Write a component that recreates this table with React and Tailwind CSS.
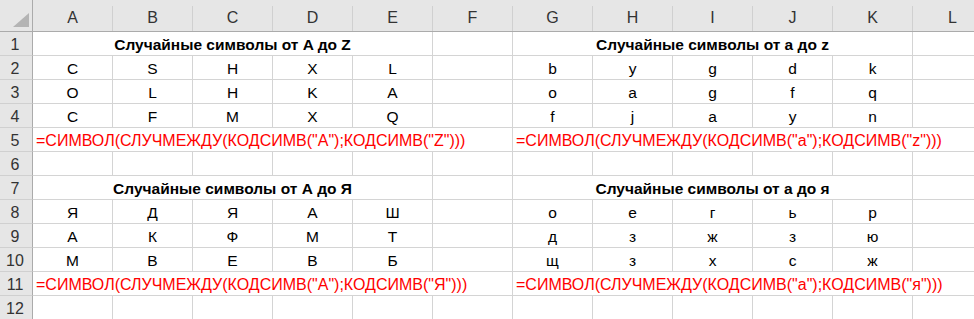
const cols = ['A', 'B', 'C', 'D', 'E', 'F', 'G', 'H', 'I', 'J', 'K', 'L']

const leftData = {
  2: ['C', 'S', 'H', 'X', 'L'],
  3: ['O', 'L', 'H', 'K', 'A'],
  4: ['C', 'F', 'M', 'X', 'Q'],
  8: ['Я', 'Д', 'Я', 'А', 'Ш'],
  9: ['А', 'К', 'Ф', 'М', 'Т'],
  10: ['М', 'В', 'Е', 'В', 'Б'],
}

const rightData = {
  2: ['b', 'y', 'g', 'd', 'k'],
  3: ['o', 'a', 'g', 'f', 'q'],
  4: ['f', 'j', 'a', 'y', 'n'],
  8: ['о', 'е', 'г', 'ь', 'р'],
  9: ['д', 'з', 'ж', 'з', 'ю'],
  10: ['щ', 'з', 'х', 'с', 'ж'],
}

const titles = {
  1: ['Случайные символы от A до Z', 'Случайные символы от a до z'],
  7: ['Случайные символы от А до Я', 'Случайные символы от а до я'],
}

const formulas = {
  5: ['=СИМВОЛ(СЛУЧМЕЖДУ(КОДСИМВ("A");КОДСИМВ("Z")))', '=СИМВОЛ(СЛУЧМЕЖДУ(КОДСИМВ("a");КОДСИМВ("z")))'],
  11: ['=СИМВОЛ(СЛУЧМЕЖДУ(КОДСИМВ("А");КОДСИМВ("Я")))', '=СИМВОЛ(СЛУЧМЕЖДУ(КОДСИМВ("а");КОДСИМВ("я")))'],
}

const cell = 'h-6 border-r border-b border-[#d4d4d4] flex items-center justify-center pt-[2px]'

function RowHead({ n }) {
  return (
    <div className="h-6 bg-[#e6e6e6] border-r border-b border-r-[#ababab] border-b-[#d0d0d0] flex items-center justify-center pt-[2px] pr-[2px] text-[#333] text-[16px]">
      {n}
    </div>
  )
}

function Row({ n }) {
  if (titles[n]) {
    return (
      <>
        <RowHead n={n} />
        <div className={`${cell} col-span-5 font-bold text-[15.5px]`}>{titles[n][0]}</div>
        <div className={cell} />
        <div className={`${cell} col-span-5 font-bold text-[15.5px]`}>{titles[n][1]}</div>
        <div className={cell} />
      </>
    )
  }
  if (formulas[n]) {
    return (
      <>
        <RowHead n={n} />
        <div className={`${cell} col-span-6 !justify-start pl-[3px] text-[#ff0000] text-[16px] whitespace-nowrap`}>{formulas[n][0]}</div>
        <div className={`${cell} col-span-6 !justify-start pl-[3px] text-[#ff0000] text-[16px] whitespace-nowrap overflow-hidden`}>{formulas[n][1]}</div>
      </>
    )
  }
  const l = leftData[n] || ['', '', '', '', '']
  const r = rightData[n] || ['', '', '', '', '']
  return (
    <>
      <RowHead n={n} />
      {l.map((v, i) => (
        <div key={'l' + i} className={cell}>{v}</div>
      ))}
      <div className={cell} />
      {r.map((v, i) => (
        <div key={'r' + i} className={cell}>{v}</div>
      ))}
      <div className={cell} />
    </>
  )
}

export default function App() {
  return (
    <div className="w-[974px] h-[319px] overflow-hidden bg-white text-black text-[15.5px] font-['Liberation_Sans',sans-serif]">
      <div className="grid grid-cols-[33px_repeat(11,80px)_80px]">
        {/* corner */}
        <div className="h-8 bg-[#e6e6e6] border-r border-b border-r-[#ababab] border-b-[#ababab] flex items-end justify-end pr-[3px] pb-[4px]">
          <svg width="16" height="14" viewBox="0 0 16 14">
            <polygon points="16,0 16,14 0,14" fill="#b4b4b4" />
          </svg>
        </div>
        {cols.map((c) => (
          <div
            key={c}
            className="h-8 bg-[#e6e6e6] border-b border-b-[#ababab] flex items-stretch"
          >
            <div className="flex-1 flex items-center justify-center pt-[4px] text-[#333] text-[16px]">{c}</div>
            <div className="w-px mt-[6px] bg-[#d0d0d0]" />
          </div>
        ))}
        {Array.from({ length: 12 }, (_, i) => (
          <Row key={i} n={i + 1} />
        ))}
      </div>
    </div>
  )
}
